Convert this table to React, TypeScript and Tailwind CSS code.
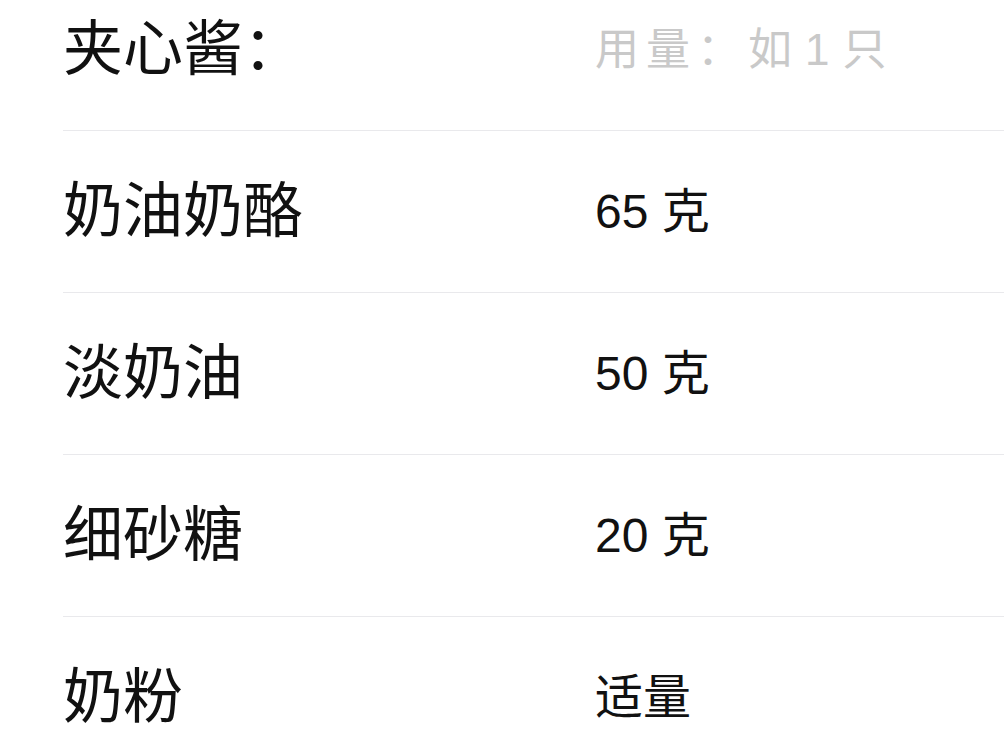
import React from 'react';

const rows = [
  { name: '奶油奶酪', amount: '65 克' },
  { name: '淡奶油', amount: '50 克' },
  { name: '细砂糖', amount: '20 克' },
  { name: '奶粉', amount: '适量' },
];

const font = { fontFamily: '"Liberation Sans", "Noto Sans CJK SC", sans-serif' };

const App = () => {
  return (
    <div className="h-[752px] w-[1004px] overflow-hidden bg-white pl-[63px]" style={font}>
      <div className="flex h-[130px] items-center pb-[30px]">
        <div className="w-[532px] text-[60px] leading-none text-[#111]">夹心酱：</div>
        <div className="text-[44px] leading-none tracking-[7px] text-[#c9c9c9]">
          用量：如<span className="mx-[6px]">1</span>只
        </div>
      </div>
      {rows.map((row) => (
        <div key={row.name} className="flex h-[162px] items-center border-t border-[#e9e9ec]">
          <div className="w-[532px] text-[60px] leading-none text-[#111]">{row.name}</div>
          <div className="text-[48px] leading-none text-[#111]">{row.amount}</div>
        </div>
      ))}
    </div>
  );
};

export default App;
